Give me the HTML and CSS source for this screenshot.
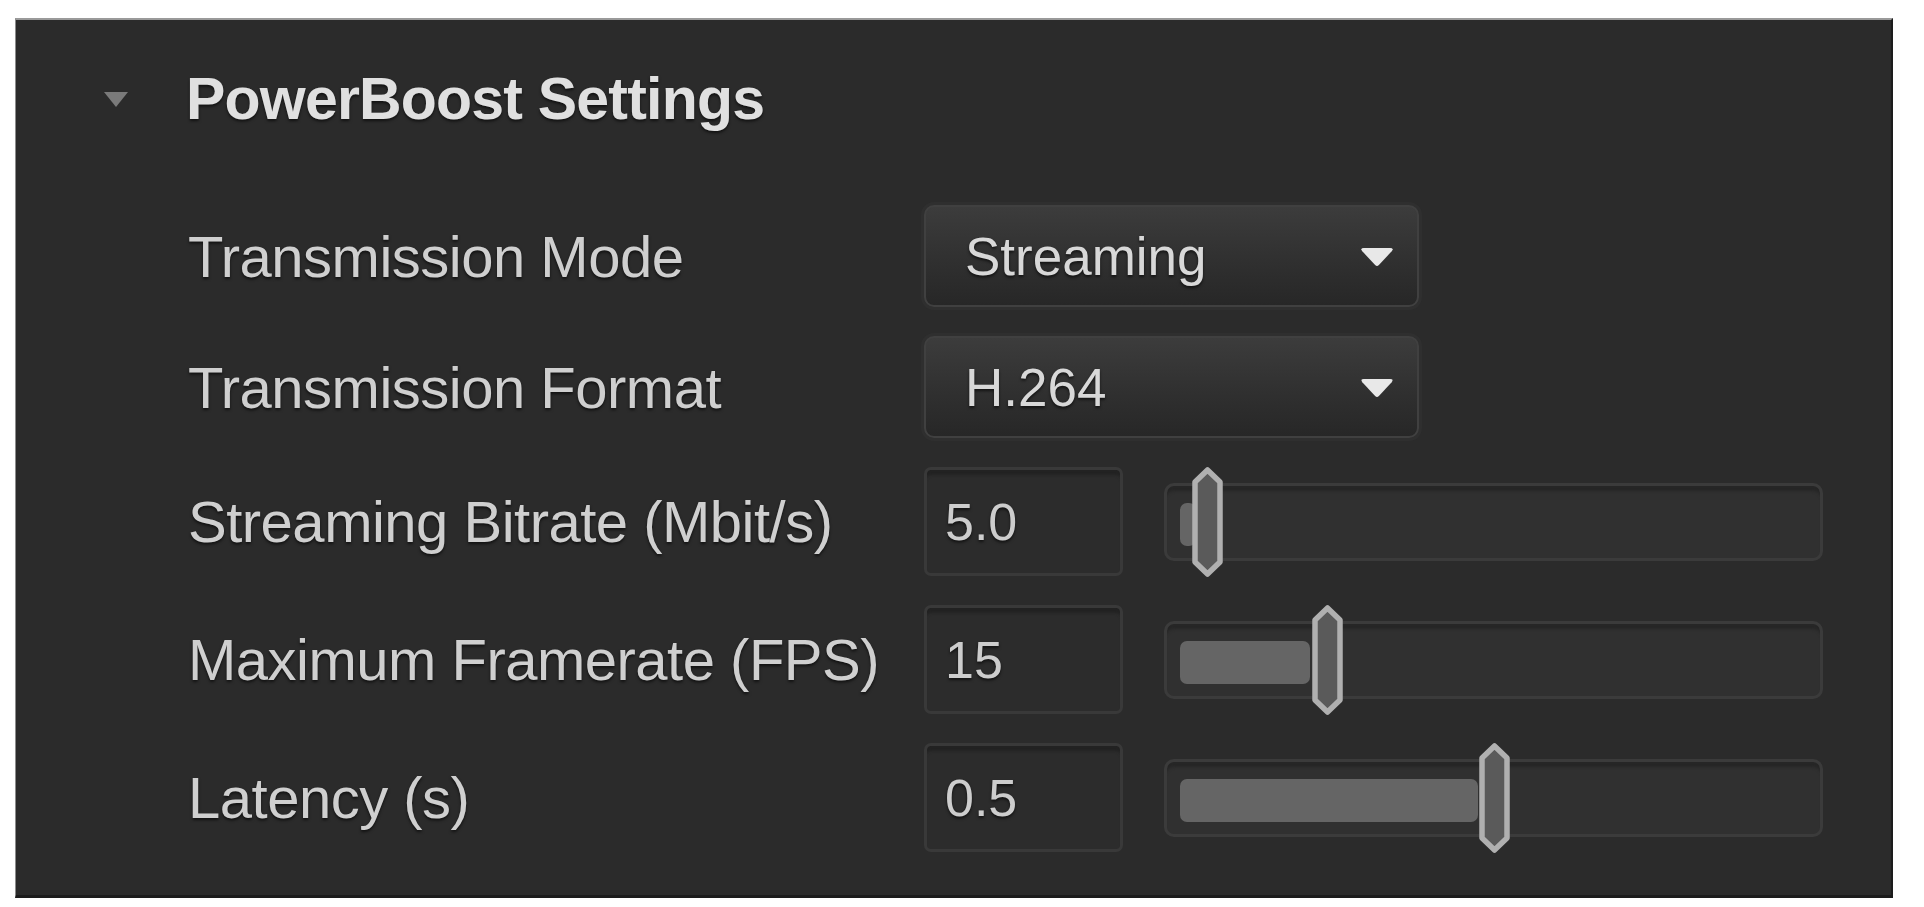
FILE: index.html
```html
<!DOCTYPE html>
<html lang="en">
<head>
    <meta charset="UTF-8">
    <meta name="viewport" content="width=device-width, initial-scale=1.0">
    <title>PowerBoost Settings</title>
    <link rel="stylesheet" href="styles.css">
</head>
<body>
    <div class="panel">
        <div class="panel-header">
            <span class="caret"></span>
            <h2 class="panel-title">PowerBoost Settings</h2>
        </div>

        <div class="settings">
            <div class="row">
                <div class="label">Transmission Mode</div>
                <div class="select">
                    <span>Streaming</span>
                    <svg class="select-arrow" viewBox="0 0 38 24" width="36" height="23">
                        <path d="M5 3 H33 Q37 3 34.5 6.5 L21 21 Q19 23 17 21 L3.5 6.5 Q1 3 5 3 Z"/>
                    </svg>
                </div>
            </div>

            <div class="row">
                <div class="label">Transmission Format</div>
                <div class="select">
                    <span>H.264</span>
                    <svg class="select-arrow" viewBox="0 0 38 24" width="36" height="23">
                        <path d="M5 3 H33 Q37 3 34.5 6.5 L21 21 Q19 23 17 21 L3.5 6.5 Q1 3 5 3 Z"/>
                    </svg>
                </div>
            </div>

            <div class="row slider-row">
                <div class="label">Streaming Bitrate (Mbit/s)</div>
                <div class="value-box">5.0</div>
                <div class="slider">
                    <div class="slider-fill" style="width: 16px"></div>
                    <svg class="slider-thumb" style="left: 23px" viewBox="0 0 35 110" width="35" height="110">
                        <path d="M17.5 3 L30 15 V95 L17.5 107 L5 95 V15 Z"/>
                    </svg>
                </div>
            </div>

            <div class="row slider-row">
                <div class="label">Maximum Framerate (FPS)</div>
                <div class="value-box">15</div>
                <div class="slider">
                    <div class="slider-fill" style="width: 130px"></div>
                    <svg class="slider-thumb" style="left: 143px" viewBox="0 0 35 110" width="35" height="110">
                        <path d="M17.5 3 L30 15 V95 L17.5 107 L5 95 V15 Z"/>
                    </svg>
                </div>
            </div>

            <div class="row slider-row">
                <div class="label">Latency (s)</div>
                <div class="value-box">0.5</div>
                <div class="slider">
                    <div class="slider-fill" style="width: 298px"></div>
                    <svg class="slider-thumb" style="left: 310px" viewBox="0 0 35 110" width="35" height="110">
                        <path d="M17.5 3 L30 15 V95 L17.5 107 L5 95 V15 Z"/>
                    </svg>
                </div>
            </div>
        </div>
    </div>
</body>
</html>
```

FILE: styles.css
```css
body {
    margin: 0;
    padding: 18px 0 0 15px;
    background-color: #ffffff;
    font-family: "Liberation Sans", Arial, sans-serif;
}

.panel {
    box-sizing: border-box;
    width: 1878px;
    height: 880px;
    padding-top: 45px;
    background-color: #2b2b2b;
    border-top: 2px solid #9a9a9a;
    border-left: 1px solid #8c8c8c;
    border-right: 2px solid #1c1c1c;
    border-bottom: 3px solid #1c1c1c;
}

.panel-header {
    display: flex;
    align-items: center;
    height: 68px;
    padding-left: 88px;
}

.caret {
    width: 0;
    height: 0;
    border-left: 12px solid transparent;
    border-right: 12px solid transparent;
    border-top: 15px solid #7a7a7a;
    margin-right: 58px;
}

.panel-title {
    margin: 0;
    font-size: 59px;
    font-weight: bold;
    letter-spacing: -0.8px;
    line-height: 68px;
    color: #e0e0e0;
    text-shadow: 0 2px 3px rgba(0, 0, 0, 0.6);
}

.settings {
    display: flex;
    flex-direction: column;
    gap: 29px;
    margin-top: 72px;
    padding-left: 172px;
}

.row {
    display: flex;
    align-items: center;
    height: 102px;
}

.slider-row {
    height: 109px;
}

.label {
    width: 736px;
    font-size: 58px;
    letter-spacing: -0.5px;
    color: #cfcfcf;
    text-shadow: 0 2px 3px rgba(0, 0, 0, 0.6);
}

.select {
    box-sizing: border-box;
    display: flex;
    align-items: center;
    justify-content: space-between;
    width: 495px;
    height: 102px;
    padding: 0 22px 0 39px;
    border: 2px solid #404040;
    border-radius: 10px;
    background: linear-gradient(#3c3c3c, #303030 55%, #272727);
    box-shadow: 0 0 0 3px #2f2f2f;
    font-size: 53px;
    color: #d8d8d8;
    text-shadow: 0 2px 3px rgba(0, 0, 0, 0.6);
}

.select-arrow {
    fill: #e8e8e8;
}

.value-box {
    box-sizing: border-box;
    display: flex;
    align-items: center;
    width: 199px;
    height: 109px;
    padding-left: 18px;
    border: 3px solid #393939;
    border-radius: 7px;
    background-color: #2c2c2c;
    box-shadow: inset 0 7px 3px -2px #222222;
    font-size: 52px;
    color: #cdcdcd;
    text-shadow: 0 2px 3px rgba(0, 0, 0, 0.6);
}

.slider {
    box-sizing: border-box;
    position: relative;
    display: flex;
    align-items: center;
    width: 659px;
    height: 78px;
    margin-left: 41px;
    padding-left: 13px;
    border: 3px solid #3b3b3b;
    border-radius: 10px;
    background-color: #303030;
    box-shadow: inset 0 7px 3px -2px #262626;
}

.slider-fill {
    height: 43px;
    margin-top: 5px;
    border-radius: 7px;
    background-color: #656565;
}

.slider-thumb {
    position: absolute;
    top: -19px;
    fill: #5a5a5a;
    stroke: #b0b0b0;
    stroke-width: 5.5;
    stroke-linejoin: round;
}
```
